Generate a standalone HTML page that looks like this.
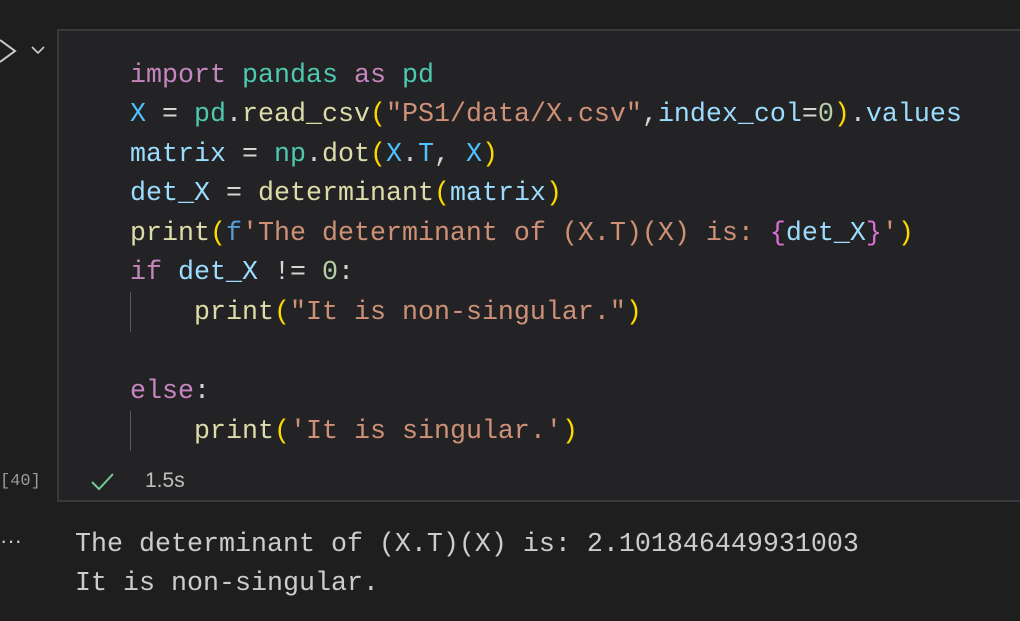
<!DOCTYPE html>
<html><head><style>
html,body{margin:0;padding:0;background:#1e1e1e;width:1020px;height:621px;overflow:hidden}
.cell{position:absolute;left:57px;top:29px;width:980px;height:473px;background:#232325;border:2px solid #39393b;box-sizing:border-box}
.l{position:absolute;left:130px;font-family:"Liberation Mono",monospace;font-size:26.67px;line-height:32px;white-space:pre;color:#d4d4d4}
.k{color:#c586c0}.m{color:#4ec9b0}.v{color:#9cdcfe}.c{color:#4fc1ff}.f{color:#dcdcaa}.s{color:#ce9178}.n{color:#b5cea8}.b1{color:#ffd700}.b2{color:#da70d6}.kb{color:#569cd6}
.g{position:absolute;left:130px;width:1px;background:#5a5a5a}
.o{position:absolute;left:75px;font-family:"Liberation Mono",monospace;font-size:26.67px;line-height:32px;white-space:pre;color:#cccccc}
.sm{position:absolute;font-family:"Liberation Sans",sans-serif;color:#aaa}
</style></head><body>
<svg style="position:absolute;left:0;top:38px" width="50" height="30"><path d="M0 2 L15 13 L0 24" fill="none" stroke="#cccccc" stroke-width="2"/><path d="M32 9 L38 15 L44 9" fill="none" stroke="#cccccc" stroke-width="1.6"/></svg>
<div class="cell"></div>
<div class="l" style="top:60px"><span class="k">import</span> <span class="m">pandas</span> <span class="k">as</span> <span class="m">pd</span></div>
<div class="l" style="top:99px"><span class="c">X</span> = <span class="m">pd</span>.<span class="f">read_csv</span><span class="b1">(</span><span class="s">"PS1/data/X.csv"</span>,<span class="v">index_col</span>=<span class="n">0</span><span class="b1">)</span>.<span class="v">values</span></div>
<div class="l" style="top:139px"><span class="v">matrix</span> = <span class="m">np</span>.<span class="f">dot</span><span class="b1">(</span><span class="c">X</span>.<span class="c">T</span>, <span class="c">X</span><span class="b1">)</span></div>
<div class="l" style="top:178px"><span class="v">det_X</span> = <span class="f">determinant</span><span class="b1">(</span><span class="v">matrix</span><span class="b1">)</span></div>
<div class="l" style="top:218px"><span class="f">print</span><span class="b1">(</span><span class="kb">f</span><span class="s">'The determinant of (X.T)(X) is: </span><span class="b2">{</span><span class="v">det_X</span><span class="b2">}</span><span class="s">'</span><span class="b1">)</span></div>
<div class="l" style="top:257px"><span class="k">if</span> <span class="v">det_X</span> != <span class="n">0</span>:</div>
<div class="l" style="top:297px">    <span class="f">print</span><span class="b1">(</span><span class="s">"It is non-singular."</span><span class="b1">)</span></div>
<div class="l" style="top:376px"><span class="k">else</span>:</div>
<div class="l" style="top:416px">    <span class="f">print</span><span class="b1">(</span><span class="s">'It is singular.'</span><span class="b1">)</span></div>
<div class="g" style="top:292px;height:40px"></div>
<div class="g" style="top:411px;height:40px"></div>
<div class="sm" style="left:0;top:472px;font-family:'Liberation Mono',monospace;font-size:17px;color:#9a9a9a">[40]</div>
<svg style="position:absolute;left:90px;top:471px" width="26" height="22"><path d="M2 11 L9 18 L23 3" fill="none" stroke="#73c991" stroke-width="2"/></svg>
<div class="sm" style="left:145px;top:469px;font-size:21px;color:#bfbfbf">1.5s</div>
<div class="sm" style="left:0;top:528px;font-size:22px;color:#cccccc;letter-spacing:0px">···</div>
<div class="o" style="top:529px">The determinant of (X.T)(X) is: 2.101846449931003</div>
<div class="o" style="top:568px">It is non-singular.</div>
</body></html>
